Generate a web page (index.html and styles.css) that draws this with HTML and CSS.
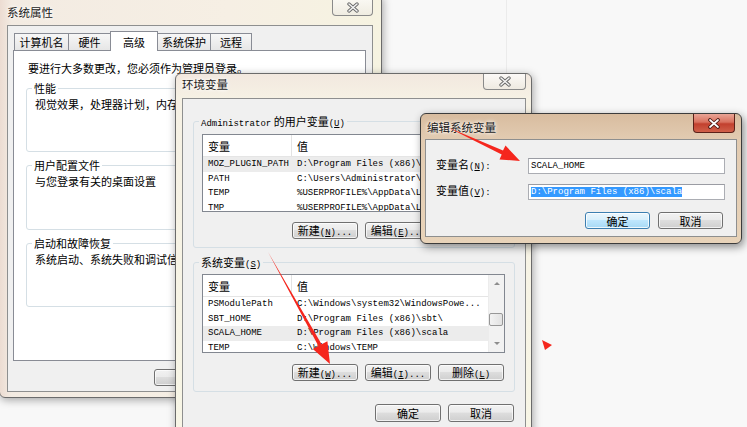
FILE: index.html
```html
<!DOCTYPE html>
<html lang="zh-CN">
<head>
    <meta charset="UTF-8">
    <title>系统属性 - 环境变量</title>
    <link rel="stylesheet" href="styles.css">
</head>
<body>
<div class="desk">
    <div class="deskline"></div>

    <!-- 系统属性 -->
    <div class="win sys">
        <div class="tbar">
            <div class="ttl">系统属性</div>
            <div class="cls">
                <svg width="14" height="11" viewBox="0 0 14 11"><path d="M3 2L11 9M11 2L3 9" stroke="#6a6a6a" stroke-width="3.4" stroke-linecap="round"/><path d="M3 2L11 9M11 2L3 9" stroke="#f4f4f4" stroke-width="1.5" stroke-linecap="round"/></svg>
            </div>
        </div>
        <div class="client">
            <div class="tabs">
                <div class="tab t-name">计算机名</div>
                <div class="tab t-hw">硬件</div>
                <div class="tab t-adv on">高级</div>
                <div class="tab t-prot">系统保护</div>
                <div class="tab t-rem">远程</div>
            </div>
            <div class="panel">
                <p class="note">要进行大多数更改，您必须作为管理员登录。</p>
                <div class="grp">
                    <span class="cap">性能</span>
                    <p>视觉效果，处理器计划，内存使用，以及虚拟内存</p>
                </div>
                <div class="grp g-mid">
                    <span class="cap">用户配置文件</span>
                    <p>与您登录有关的桌面设置</p>
                </div>
                <div class="grp">
                    <span class="cap">启动和故障恢复</span>
                    <p>系统启动、系统失败和调试信息</p>
                </div>
            </div>
            <div class="foot foot-sys">
                <button class="btn">确定</button>
                <button class="btn">取消</button>
                <button class="btn">应用</button>
            </div>
        </div>
    </div>

    <!-- 环境变量 -->
    <div class="win env">
        <div class="tbar">
            <div class="ttl">环境变量</div>
            <div class="cls">
                <svg width="14" height="11" viewBox="0 0 14 11"><path d="M3 2L11 9M11 2L3 9" stroke="#6a6a6a" stroke-width="3.4" stroke-linecap="round"/><path d="M3 2L11 9M11 2L3 9" stroke="#f4f4f4" stroke-width="1.5" stroke-linecap="round"/></svg>
            </div>
        </div>
        <div class="client">
            <div class="grp grp-user">
                <span class="cap"><span class="m">Administrator</span> 的用户变量<span class="m">(<u>U</u>)</span></span>
                <div class="lv lv-user">
                    <div class="lv-body">
                        <div class="lv-head"><span class="c1">变量</span><span class="c2">值</span></div>
                        <div class="lv-row hl"><span class="c1 m">MOZ_PLUGIN_PATH</span><span class="c2 m">D:\Program Files (x86)\Foxit\plugin</span></div>
                        <div class="lv-row"><span class="c1 m">PATH</span><span class="c2 m">C:\Users\Administrator\AppData</span></div>
                        <div class="lv-row"><span class="c1 m">TEMP</span><span class="c2 m">%USERPROFILE%\AppData\Local\Temp</span></div>
                        <div class="lv-row"><span class="c1 m">TMP</span><span class="c2 m">%USERPROFILE%\AppData\Local\Temp</span></div>
                    </div>
                </div>
                <div class="btnrow">
                    <button class="btn">新建<span class="m">(<u>N</u>)...</span></button>
                    <button class="btn">编辑<span class="m">(<u>E</u>)...</span></button>
                    <button class="btn">删除<span class="m">(<u>D</u>)</span></button>
                </div>
            </div>
            <div class="grp grp-sys">
                <span class="cap">系统变量<span class="m">(<u>S</u>)</span></span>
                <div class="lv lv-sys">
                    <div class="lv-body">
                        <div class="lv-head"><span class="c1">变量</span><span class="c2">值</span></div>
                        <div class="lv-row"><span class="c1 m">PSModulePath</span><span class="c2 m">C:\Windows\system32\WindowsPowe...</span></div>
                        <div class="lv-row"><span class="c1 m">SBT_HOME</span><span class="c2 m">D:\Program Files (x86)\sbt\</span></div>
                        <div class="lv-row hl"><span class="c1 m">SCALA_HOME</span><span class="c2 m">D:\Program Files (x86)\scala</span></div>
                        <div class="lv-row"><span class="c1 m">TEMP</span><span class="c2 m">C:\Windows\TEMP</span></div>
                    </div>
                    <div class="sb">
                        <div class="sb-btn"><span class="tri up"></span></div>
                        <div class="sb-track"><div class="thumb"></div></div>
                        <div class="sb-btn"><span class="tri down"></span></div>
                    </div>
                </div>
                <div class="btnrow btnrow-sys">
                    <button class="btn">新建<span class="m">(<u>W</u>)...</span></button>
                    <button class="btn">编辑<span class="m">(<u>I</u>)...</span></button>
                    <button class="btn">删除<span class="m">(<u>L</u>)</span></button>
                </div>
            </div>
            <div class="foot foot-env">
                <button class="btn">确定</button>
                <button class="btn">取消</button>
            </div>
        </div>
    </div>

    <!-- 编辑系统变量 -->
    <div class="win edit">
        <div class="tbar">
            <div class="ttl">编辑系统变量</div>
            <div class="cls red">
                <svg width="14" height="11" viewBox="0 0 14 11"><path d="M3 2L11 9M11 2L3 9" stroke="#4a1610" stroke-width="3.6" stroke-linecap="round"/><path d="M3 2L11 9M11 2L3 9" stroke="#ffffff" stroke-width="1.7" stroke-linecap="round"/></svg>
            </div>
        </div>
        <div class="client">
            <div class="form">
                <label>变量名<span class="m">(<u>N</u>):</span></label>
                <div class="field m">SCALA_HOME</div>
                <label>变量值<span class="m">(<u>V</u>):</span></label>
                <div class="field m"><span class="sel">D:\Program Files (x86)\scala</span></div>
            </div>
            <div class="btnrow btnrow-edit">
                <button class="btn focus">确定</button>
                <button class="btn">取消</button>
            </div>
        </div>
    </div>

    <svg class="marks" width="747" height="427" viewBox="0 0 747 427">
        <polygon fill="#f5261d" points="447,127 503,150.6 505.5,145.5 520,161 499.5,159.5 501.7,154.6"/>
        <polygon fill="#f5261d" points="268,252 321.6,344.2 327.4,341.3 330,364 312.8,349 318.4,346"/>
        <polygon fill="#f5261d" points="542,340 552,345 545,350"/>
    </svg>
</div>
</body>
</html>
```

FILE: styles.css
```css
* {
    box-sizing: border-box;
}

body {
    margin: 0;
    background-color: #f8f8f8;
    font-family: "Noto Sans CJK SC", sans-serif;
    font-size: 11px;
    line-height: 14px;
    color: #000;
}

.desk {
    position: relative;
    width: 747px;
    height: 427px;
    overflow: hidden;
}

.deskline {
    position: absolute;
    left: 506px;
    top: 0;
    width: 1px;
    height: 80px;
    background-color: #ebebeb;
}

.m {
    font-family: "Liberation Mono", monospace;
    font-size: 9px;
}

p {
    margin: 0;
}

/* window frames */
.win {
    position: absolute;
    display: flex;
    flex-direction: column;
    border: 1px solid #6b6b6b;
    border-radius: 6px;
    box-shadow: 1px 2px 8px rgba(0, 0, 0, 0.35);
}

.tbar {
    display: flex;
    align-items: flex-start;
    flex: none;
}

.ttl {
    font-size: 11.5px;
    line-height: 14px;
    color: #1a1a1a;
    text-shadow: 0 0 5px #fff, 0 0 3px #fff;
}

.cls {
    margin-left: auto;
    display: flex;
    align-items: center;
    justify-content: center;
    border: 1px solid #8a8a8a;
    border-top: none;
    border-radius: 0 0 4px 4px;
    background: linear-gradient(rgba(255, 255, 255, 0.75), rgba(235, 232, 225, 0.6));
}

.cls.red {
    border-color: #5b2119;
    background: linear-gradient(#e9a596 0%, #d9715f 45%, #c2402e 55%, #d0604a 100%);
}

.client {
    flex: 1;
    display: flex;
    flex-direction: column;
    background-color: #f0f0f0;
    border: 1px solid #8e8f8f;
}

/* 系统属性 */
.sys {
    left: -1px;
    top: -6px;
    width: 383px;
    height: 404px;
    padding: 0 8px 5px 7px;
    background: linear-gradient(90deg, #ecdcd2 0, #f3ebe2 3%, #f6efe4 60%, #f6f3e1 100%);
}

.sys .tbar {
    height: 30px;
}

.sys .ttl {
    padding-top: 10px;
}

.sys .cls {
    width: 41px;
    height: 21px;
    padding-top: 5px;
}

.tabs {
    display: flex;
    align-items: flex-end;
    height: 19px;
    margin: 5px 0 0 6px;
}

.tab {
    height: 17px;
    display: flex;
    align-items: center;
    justify-content: center;
    border: 1px solid #898c95;
    border-bottom: none;
    margin-left: -1px;
    background: linear-gradient(#f7f7f7, #e6e6e6);
}

.tab:first-child {
    margin-left: 0;
}

.tab.on {
    position: relative;
    z-index: 2;
    height: 20px;
    margin-bottom: -1px;
    background: #fff;
}

.t-name { width: 55px; }
.t-hw { width: 43px; }
.t-adv { width: 48px; }
.t-prot { width: 54px; }
.t-rem { width: 42px; }

.panel {
    width: 353px;
    height: 311px;
    margin-left: 5px;
    padding-top: 10px;
    background-color: #fff;
    border: 1px solid #898c95;
}

.note {
    margin-left: 14px;
}

.grp {
    border: 1px solid #d5dfe5;
    border-radius: 3px;
}

.panel .grp {
    width: 330px;
    height: 64px;
    margin: 13px 0 0 12px;
    background-color: #fff;
}

.panel .grp.g-mid {
    height: 65px;
}

.cap {
    display: block;
    width: max-content;
    height: 14px;
    margin: -8px 0 0 5px;
    padding: 0 2px;
    background-color: inherit;
}

.panel .grp p {
    margin: 2px 0 0 8px;
    white-space: nowrap;
}

.foot {
    display: flex;
    gap: 7px;
}

.foot-sys {
    margin: 8px 0 0 146px;
}

/* buttons */
.btn {
    width: 66px;
    height: 17px;
    padding: 0;
    font-family: inherit;
    font-size: 11px;
    line-height: 14px;
    color: #000;
    border: 1px solid #707070;
    border-radius: 3px;
    background: linear-gradient(#f2f2f2 0%, #ebebeb 45%, #dddddd 50%, #cfcfcf 100%);
    box-shadow: inset 0 0 0 1px rgba(255, 255, 255, 0.7);
    white-space: nowrap;
}

.btn.focus {
    border-color: #3c7fb1;
    background: linear-gradient(#eaf6fd 0%, #d9f0fc 45%, #bee6fd 50%, #a7d9f5 100%);
    box-shadow: inset 0 0 0 1px rgba(255, 255, 255, 0.8);
}

/* 环境变量 */
.env {
    left: 175px;
    top: 73px;
    width: 357px;
    height: 370px;
    padding: 0 5px 0 6px;
    background: linear-gradient(#f2e8df 0, #f6f1e4 24px, #f8f6e6 100%);
}

.env .tbar {
    height: 24px;
}

.env .ttl {
    padding-top: 3px;
}

.env .cls {
    width: 43px;
    height: 16px;
}

.env .grp {
    width: 322px;
    margin-left: 10px;
    background-color: #f0f0f0;
}

.grp-user {
    height: 127px;
    margin-top: 22px;
}

.grp-sys {
    height: 130px;
    margin-top: 14px;
}

.lv {
    display: flex;
    width: 303px;
    margin-left: 8px;
    background-color: #fff;
    border: 1px solid #828790;
    overflow: hidden;
}

.lv-user {
    height: 78px;
    margin-top: 6px;
}

.lv-sys {
    height: 79px;
    margin-top: 5px;
}

.lv-body {
    flex: 1;
    min-width: 0;
    overflow: hidden;
}

.lv-head,
.lv-row {
    display: flex;
    white-space: nowrap;
}

.lv-head {
    height: 22px;
    align-items: center;
    border-bottom: 1px solid #e5e5e5;
}

.lv-row {
    height: 14.5px;
    line-height: 14.5px;
}

.lv-row.hl {
    background-color: #ececec;
}

.c1 {
    flex: none;
    width: 89px;
    padding-left: 5px;
    overflow: hidden;
}

.lv-head .c1 {
    height: 100%;
    display: flex;
    align-items: center;
    border-right: 1px solid #e3e3e3;
}

.c2 {
    padding-left: 5px;
}

.sb {
    flex: none;
    width: 16px;
    display: flex;
    flex-direction: column;
    background-color: #f2f2f2;
    border-left: 1px solid #ececec;
}

.sb-btn {
    height: 17px;
    display: flex;
    align-items: center;
    justify-content: center;
}

.sb-track {
    flex: 1;
}

.thumb {
    width: 14px;
    height: 13px;
    margin: 21px 0 0 0;
    border: 1px solid #979797;
    border-radius: 2px;
    background: linear-gradient(90deg, #f3f3f3, #e2e2e2);
}

.tri {
    width: 0;
    height: 0;
    border-left: 3px solid transparent;
    border-right: 3px solid transparent;
}

.tri.up {
    border-bottom: 3px solid #8d8d8d;
}

.tri.down {
    border-top: 3px solid #8d8d8d;
}

.btnrow {
    display: flex;
    gap: 7px;
    margin: 10px 0 0 98px;
}

.btnrow-sys {
    margin-top: 11px;
}

.foot-env {
    justify-content: flex-end;
    margin-top: 12px;
    padding-right: 11px;
}

.foot-env .btn {
    height: 18px;
}

/* 编辑系统变量 */
.edit {
    left: 420px;
    top: 113px;
    width: 322px;
    height: 131px;
    padding: 0 4px 6px 4px;
    border-color: #3c3c3c;
    background: linear-gradient(#d8bc9f 0, #e2cbb1 25px, #e8d3b9 100%);
    box-shadow: 2px 3px 9px rgba(0, 0, 0, 0.45);
}

.edit .tbar {
    height: 25px;
}

.edit .ttl {
    padding: 6px 0 0 2px;
}

.edit .cls {
    width: 42px;
    height: 19px;
    margin-right: 2px;
}

.form {
    display: grid;
    grid-template-columns: 92px 197px;
    row-gap: 9px;
    align-items: center;
    margin: 17px 0 0 10px;
}

.field {
    height: 16px;
    line-height: 14px;
    padding-left: 2px;
    background-color: #fff;
    border: 1px solid #abadb3;
    border-top-color: #9a9ca3;
    white-space: nowrap;
    overflow: hidden;
}

.sel {
    background-color: #3399ff;
    color: #fff;
}

.btnrow-edit {
    gap: 8px;
    margin: 12px 0 0 159px;
}

.btnrow-edit .btn {
    width: 65px;
}

.marks {
    position: absolute;
    left: 0;
    top: 0;
    pointer-events: none;
}
```
